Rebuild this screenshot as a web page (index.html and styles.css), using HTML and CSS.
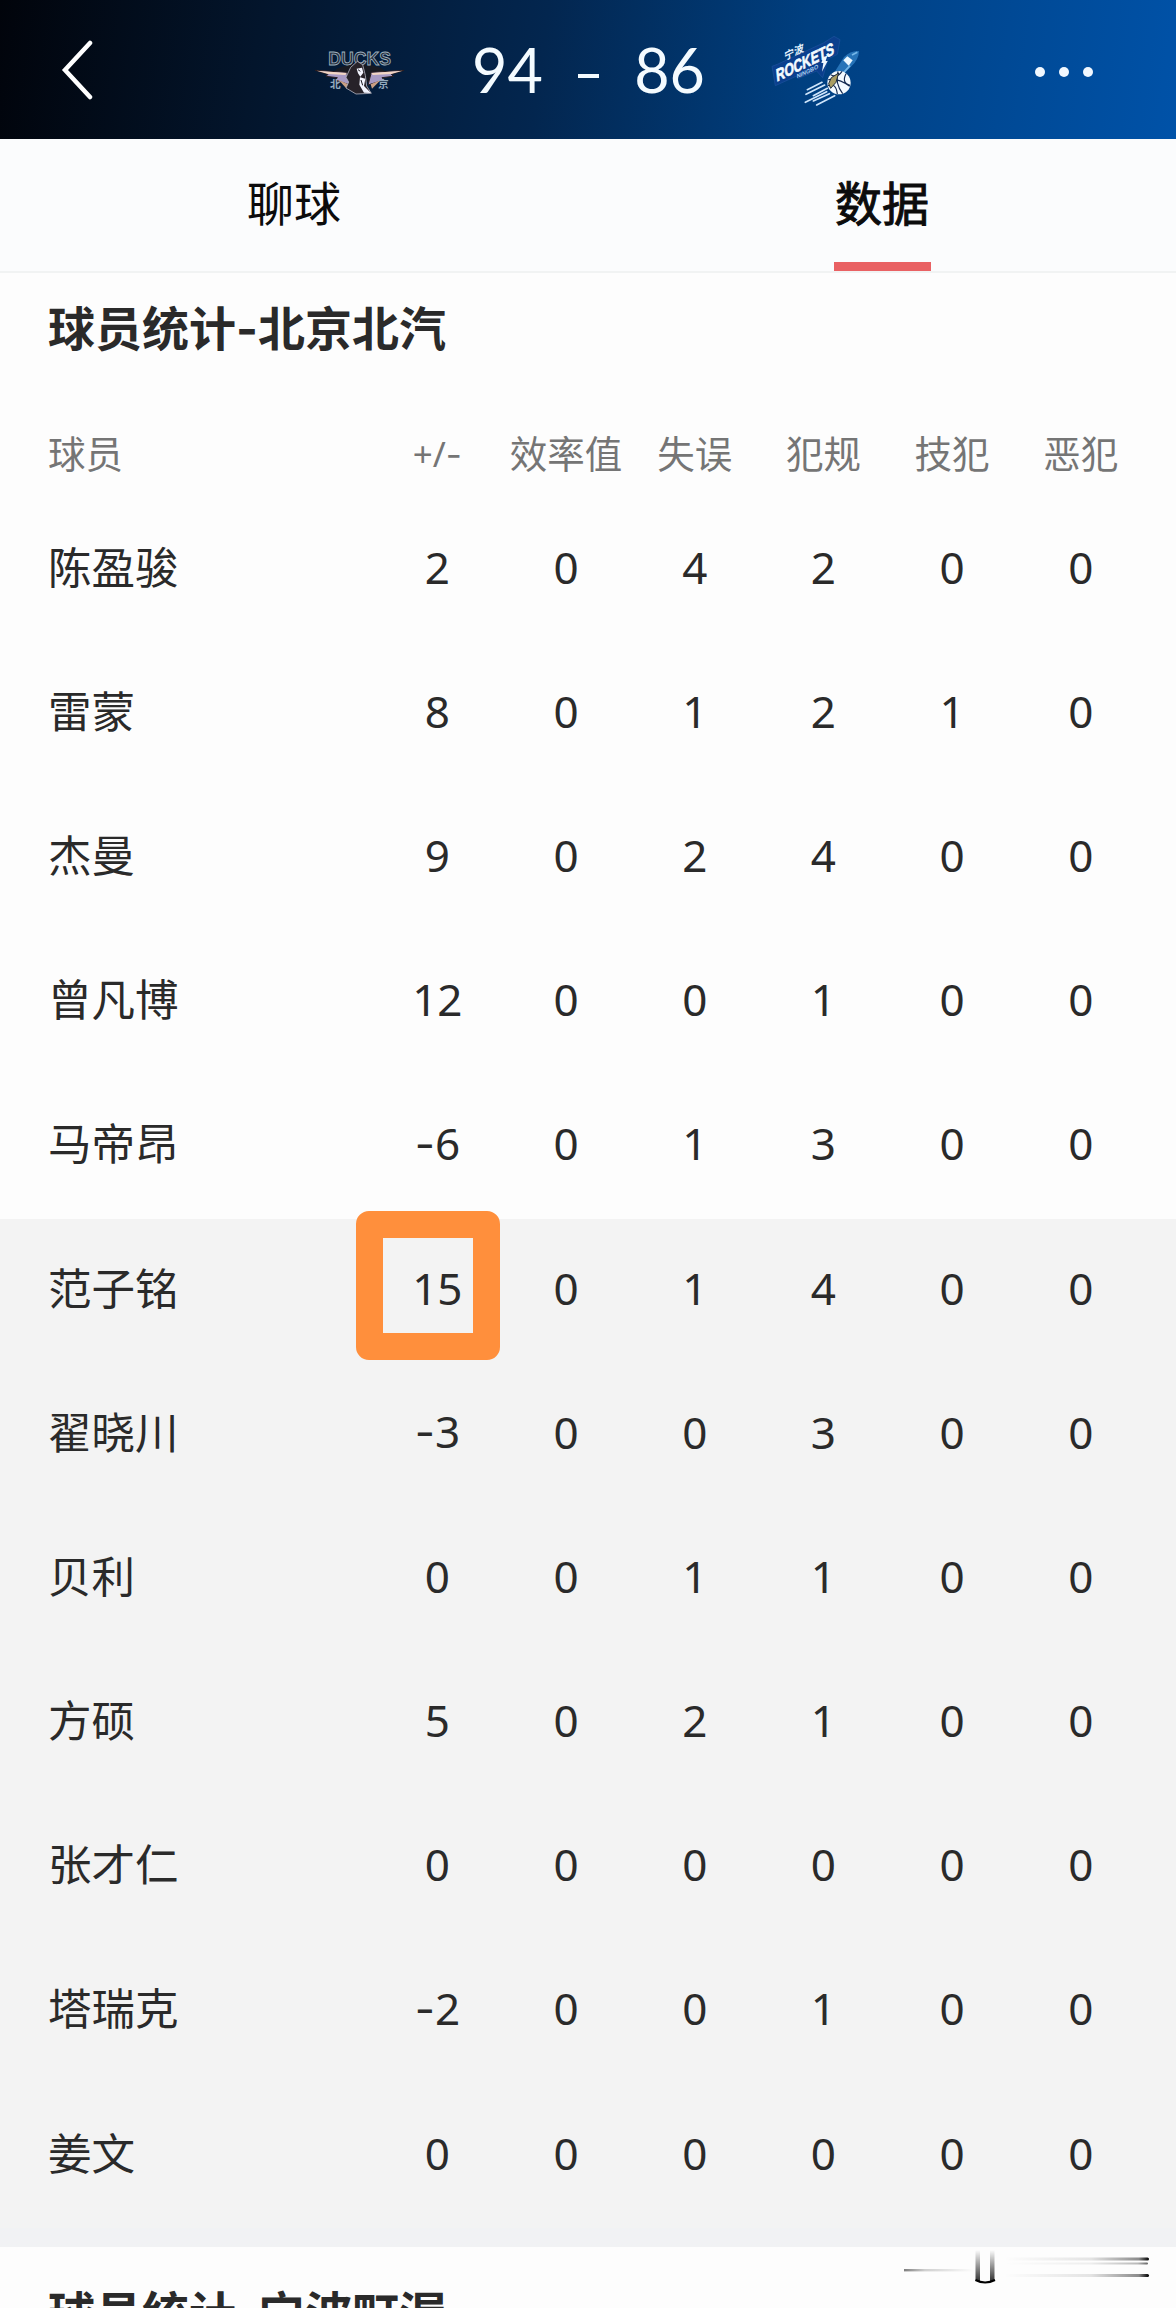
FILE: index.html
```html
<!DOCTYPE html>
<html lang="zh-CN">
<head>
  <meta charset="UTF-8" />
  <meta name="viewport" content="width=device-width, initial-scale=1.0"/>
  <title>球员统计</title>
  <link rel="stylesheet" href="styles.css">
</head>
<body>
  <header class="topbar">
    <svg class="back" viewBox="0 0 34 60"><path d="M29 3 L4 30 L29 57" fill="none" stroke="#fff" stroke-width="4.5" stroke-linecap="round"/></svg>

    <div class="match">
      <!-- Ducks -->
      <svg class="logo" width="120" height="80" viewBox="0 0 360 240">
        <ellipse cx="179" cy="130" rx="78" ry="27" fill="#181a22"/>
        <path d="M46 121 L140 127 L150 165 L106 150 L112 143 L78 139 L84 133 Z" fill="#a79ac4" stroke="#2a1d20" stroke-width="3"/>
        <path d="M312 121 L214 127 L204 165 L252 150 L246 143 L280 139 L274 133 Z" fill="#a79ac4" stroke="#2a1d20" stroke-width="3"/>
        <path d="M50 122 L140 129 L136 135 L84 132 Z M308 122 L214 129 L218 135 L274 132 Z" fill="#f2d5c4"/>
        <path d="M116 150 L145 163 L140 176 Z M242 150 L212 163 L216 176 Z" fill="#c99f83"/>
        <text class="ducks" x="179" y="106" text-anchor="middle" textLength="188" lengthAdjust="spacingAndGlyphs">DUCKS</text>
        <path d="M172 94 L188 104 L196 136 L200 168 L214 190 L168 192 L138 174 L146 156 L138 142 L152 112 Z" fill="#272229" stroke="#aeb0bd" stroke-width="2.5"/>
        <path d="M170 116 L186 113 L190 128 L181 140 L174 130 Z M180 142 L196 146 L192 168 L213 189 L192 188 L178 164 Z" fill="#f3f5ff"/>
        <path d="M174 119 L181 124 M183 150 L188 166" stroke="#191820" stroke-width="3"/>
        <text class="city" x="90" y="175">北</text>
        <text class="city" x="234" y="175">京</text>
      </svg>

      <div class="score"><span>94</span><i class="score-dash"></i><span>86</span></div>

      <!-- Rockets -->
      <svg class="logo" width="116" height="90" viewBox="0 0 348 270">
        <path d="M36 124 L52 118 L190 54 L222 34 L240 44 L232 88 L204 102 L188 158 L170 138 L116 160 L108 154 L46 182 Z" fill="#0b3f8d" stroke="#1d539f" stroke-width="2"/>
        <g transform="matrix(.92 -.44 .1 .99 50 170)">
          <text class="rockets" x="0" y="0" textLength="188" lengthAdjust="spacingAndGlyphs">ROCKETS</text>
          <text class="ningbo" x="64" y="19" textLength="70" lengthAdjust="spacingAndGlyphs">NINGBO</text>
          <text class="ning" x="32" y="-50">宁波</text>
        </g>
        <path d="M190 96 L202 92 L197 108 L203 108 L186 140 L190 114 L184 114 Z" fill="#eef7ff"/>
        <path d="M142 194 L186 172 M138 208 L194 180 M160 212 L202 190 M136 232 L200 200 M160 228 L208 206 M170 240 L224 212" stroke="#cfe5fb" stroke-width="5" stroke-linecap="round"/>
        <path d="M222 144 L252 96 Q272 76 297 78 Q297 102 274 124 L246 152 Z" fill="#2673b8"/>
        <path d="M250 106 L262 94 L278 106 L266 122 Z" fill="#e9f6ff"/>
        <path d="M276 90 L292 82 M270 122 L246 148" stroke="#75b7e8" stroke-width="5"/>
        <circle cx="237" cy="173" r="35" fill="#f4faff"/>
        <path d="M205 164 Q236 158 269 184 M234 139 Q224 174 248 206 M258 146 Q244 174 270 181 M204 182 Q228 172 232 207 M212 149 Q232 160 246 139" fill="none" stroke="#152a50" stroke-width="3.5"/>
        <path d="M214 158 L236 144 L228 172 L212 190 L206 176 Z" fill="#a99d61" stroke="#1e2b3c" stroke-width="3"/>
      </svg>
    </div>

    <div class="more"><i></i><i></i><i></i></div>
  </header>

  <nav class="tabs">
    <div class="tab">聊球</div>
    <div class="tab active"><span>数据</span></div>
  </nav>

  <main class="stats">
    <h2>球员统计<span class="dash">-</span>北京北汽</h2>
    <div class="row head"><span>球员</span><span>+/<b class="dash">-</b></span><span>效率值</span><span>失误</span><span>犯规</span><span>技犯</span><span>恶犯</span></div>

    <div class="row"><span>陈盈骏</span><span>2</span><span>0</span><span>4</span><span>2</span><span>0</span><span>0</span></div>
    <div class="row"><span>雷蒙</span><span>8</span><span>0</span><span>1</span><span>2</span><span>1</span><span>0</span></div>
    <div class="row"><span>杰曼</span><span>9</span><span>0</span><span>2</span><span>4</span><span>0</span><span>0</span></div>
    <div class="row"><span>曾凡博</span><span>12</span><span>0</span><span>0</span><span>1</span><span>0</span><span>0</span></div>
    <div class="row"><span>马帝昂</span><span><b class="dash">-</b>6</span><span>0</span><span>1</span><span>3</span><span>0</span><span>0</span></div>

    <!-- bench -->
    <div class="bench">
      <div class="row"><span>范子铭</span><span class="marked">15</span><span>0</span><span>1</span><span>4</span><span>0</span><span>0</span></div>
      <div class="row"><span>翟晓川</span><span><b class="dash">-</b>3</span><span>0</span><span>0</span><span>3</span><span>0</span><span>0</span></div>
      <div class="row"><span>贝利</span><span>0</span><span>0</span><span>1</span><span>1</span><span>0</span><span>0</span></div>
      <div class="row"><span>方硕</span><span>5</span><span>0</span><span>2</span><span>1</span><span>0</span><span>0</span></div>
      <div class="row"><span>张才仁</span><span>0</span><span>0</span><span>0</span><span>0</span><span>0</span><span>0</span></div>
      <div class="row"><span>塔瑞克</span><span><b class="dash">-</b>2</span><span>0</span><span>0</span><span>1</span><span>0</span><span>0</span></div>
      <div class="row"><span>姜文</span><span>0</span><span>0</span><span>0</span><span>0</span><span>0</span><span>0</span></div>
    </div>

    <div class="next">
      <h2>球员统计<span class="dash">-</span>宁波町渥</h2>
      <svg class="smear" width="246" height="40" viewBox="0 0 246 40">
        <defs>
          <linearGradient id="toRight"><stop offset="0" stop-color="#000" stop-opacity="0"/><stop offset=".6" stop-color="#000" stop-opacity=".1"/><stop offset=".93" stop-color="#000" stop-opacity=".45"/><stop offset="1" stop-color="#000"/></linearGradient>
          <linearGradient id="toLeft"><stop offset="0" stop-color="#000" stop-opacity=".5"/><stop offset=".3" stop-color="#000" stop-opacity=".18"/><stop offset="1" stop-color="#000" stop-opacity="0"/></linearGradient>
          <linearGradient id="down" x2="0" y2="1"><stop offset="0" stop-color="#000" stop-opacity="0"/><stop offset="1" stop-color="#000" stop-opacity=".8"/></linearGradient>
        </defs>
        <rect x="0" y="21" width="70" height="2.4" fill="url(#toLeft)"/>
        <rect x="100" y="9.5" width="145" height="3" rx="1.5" fill="url(#toRight)"/>
        <rect x="100" y="14.5" width="144" height="2" rx="1" fill="url(#toRight)" opacity=".6"/>
        <rect x="100" y="26" width="145" height="3" rx="1.5" fill="url(#toRight)"/>
        <rect x="71.5" y="2" width="4.5" height="31" fill="url(#down)"/>
        <rect x="86" y="2" width="4.5" height="31" fill="url(#down)"/>
        <path d="M71.5 32 Q81 37 91 32" fill="none" stroke="#000" stroke-width="2"/>
      </svg>
    </div>
  </main>
</body>
</html>
```
FILE: styles.css
```css
*, *::after {
  box-sizing: border-box;
}

body {
  margin: 0;
  height: 2308px;
  overflow: hidden;
  font-family: "Noto Sans", "Noto Sans CJK SC", sans-serif;
  background: #fdfdfd;
  color: #2a2a2a;
}

.topbar {
  display: grid;
  grid-template-columns: 1fr auto 1fr;
  align-items: center;
  height: 139px;
  padding: 0 61px;
  background: linear-gradient(98deg, #01040b 0%, #03152c 22%, #03264f 46%, #003f80 68%, #0052a8 100%);
}

.back {
  width: 34px;
  height: 60px;
}

.match {
  display: flex;
  align-items: center;
  gap: 52px;
}

.logo {
  display: block;
}

.score {
  display: flex;
  justify-content: space-between;
  align-items: center;
  width: 233px;
  margin-right: 3px;
  font-family: Lato, sans-serif;
  font-size: 61px;
  line-height: 1;
  color: #f4fbff;
}

.score-dash {
  width: 21px;
  height: 4px;
  margin-top: 12px;
  background: #f4fbff;
}

.ducks {
  font: bold 54px "Liberation Sans", sans-serif;
  fill: #252d3b;
  stroke: #9fb1bf;
  stroke-width: 2.5;
}

.city {
  font: bold 32px "Noto Sans CJK SC", sans-serif;
  fill: #93aabd;
}

.rockets {
  font: bold 52px "Liberation Sans", sans-serif;
  fill: #f4fbff;
  stroke: #f4fbff;
  stroke-width: 2;
}

.ningbo {
  font: bold 18px "Liberation Sans", sans-serif;
  fill: #a9cdf0;
}

.ning {
  font: bold 32px "Noto Sans CJK SC", sans-serif;
  fill: #e5f2fd;
}

.more {
  display: flex;
  justify-content: flex-end;
  gap: 14px;
  padding: 5px 22px 0 0;
}

.more i {
  width: 10px;
  height: 10px;
  border-radius: 50%;
  background: #f1f8ff;
}

.tabs {
  display: flex;
  height: 134px;
  background: #fbfcfd;
  border-bottom: 2px solid #f1f3f3;
}

.tab {
  flex: 1;
  text-align: center;
  font-size: 47px;
  line-height: 129px;
  color: #0c0c0c;
}

.tab.active {
  -webkit-text-stroke: 1px #0c0c0c;
}

.tab.active span {
  display: inline-block;
  width: 97px;
  height: 132px;
  border-bottom: 9px solid #e96163;
}

h2 {
  margin: 0 0 29px;
  padding-left: 48px;
  font-size: 47px;
  line-height: 110px;
  font-weight: 700;
}

.dash {
  font-family: Inter, sans-serif;
  font-weight: inherit;
}

.row {
  display: grid;
  grid-template-columns: 325px repeat(6, 128.7px);
  align-items: center;
  height: 144.2px;
  padding: 0 0 7px 48px;
  font-size: 44px;
  line-height: 60px;
  text-align: center;
}

.row span:first-child {
  text-align: left;
  font-size: 43.5px;
}

.row.head {
  height: 85px;
  padding-bottom: 4px;
  font-size: 37.5px;
  color: #757575;
}

.row.head span {
  white-space: nowrap;
}

.row.head span:first-child {
  font-size: 37.5px;
}

.row.head span:nth-child(2) {
  font-size: 35px;
}

.bench {
  height: 1028px;
  background: linear-gradient(#f3f3f3 1009px, #f1f2f4 1009px);
}

/* hand-drawn frame around one value */
.marked {
  position: relative;
}

.marked::after {
  content: "";
  position: absolute;
  left: -17px;
  top: -47px;
  width: 144px;
  height: 149px;
  border: 27px solid #ff8f3c;
  border-radius: 13px;
}

.next {
  position: relative;
  height: 61px;
  padding-top: 11px;
  overflow: hidden;
}

.smear {
  position: absolute;
  left: 904px;
  top: 1px;
}
```
